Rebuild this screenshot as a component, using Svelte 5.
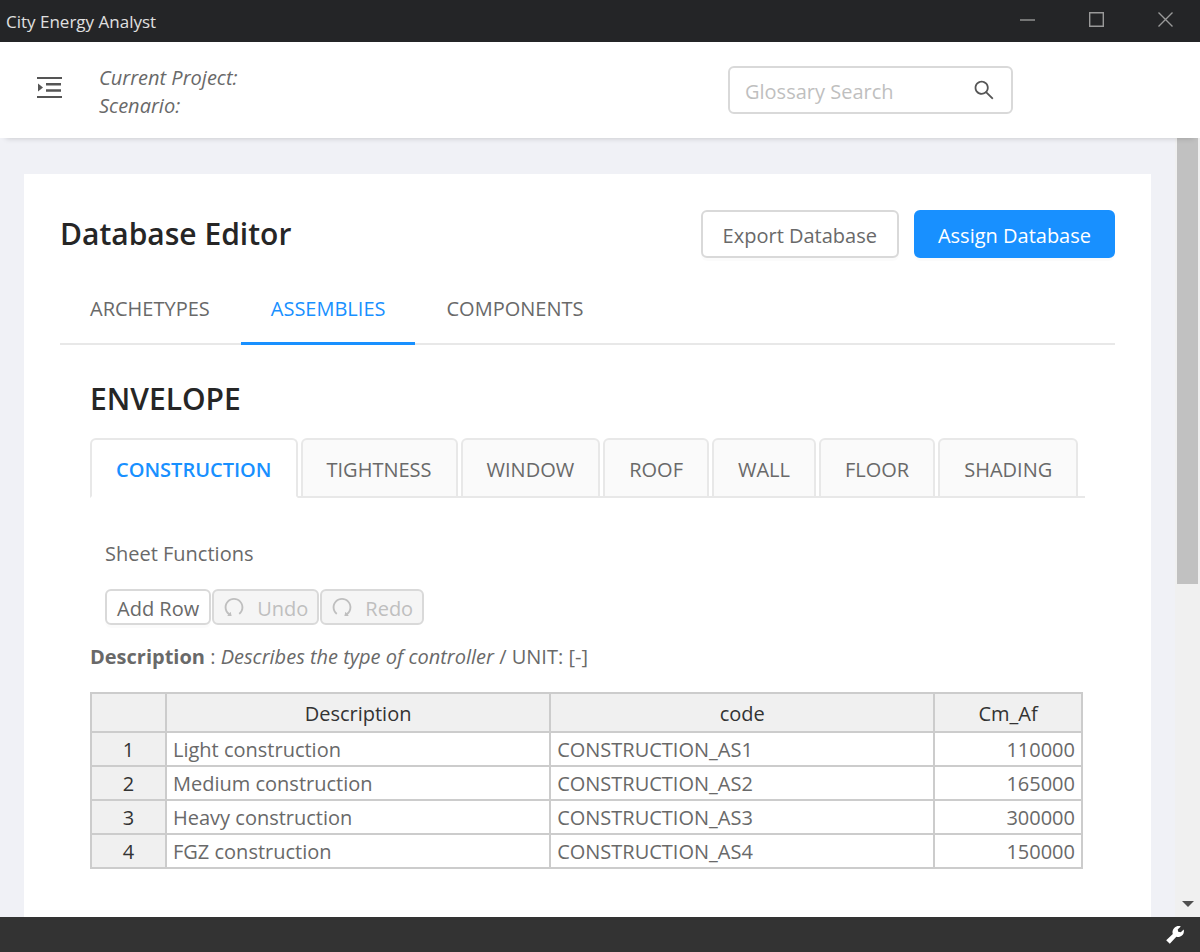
<script>
  const mainTabs = ['ARCHETYPES', 'ASSEMBLIES', 'COMPONENTS'];
  const sheets = ['CONSTRUCTION', 'TIGHTNESS', 'WINDOW', 'ROOF', 'WALL', 'FLOOR', 'SHADING'];
  const rows = [
    ['Light construction', 'CONSTRUCTION_AS1', 110000],
    ['Medium construction', 'CONSTRUCTION_AS2', 165000],
    ['Heavy construction', 'CONSTRUCTION_AS3', 300000],
    ['FGZ construction', 'CONSTRUCTION_AS4', 150000],
  ];
  let mainTab = $state('ASSEMBLIES');
  let sheet = $state('CONSTRUCTION');
</script>

{#snippet turnArrow()}
  <path d="M511.4 124C290.5 124.3 112 303 112 523.9c0 128 60.2 242 153.8 315.2l-37.5 48c-4.1 5.3-.3 13 6.3 12.9l167-.8c5.2 0 9-4.9 7.7-9.9L369.8 727a8 8 0 0 0-14.1-3L315 776.1c-10.2-8-20-16.7-29.3-26a318.64 318.64 0 0 1-68.6-101.7C200.4 609 192 567.1 192 523.9s8.4-85.1 25.1-124.5c16.1-38.1 39.2-72.3 68.6-101.7 29.4-29.4 63.6-52.5 101.7-68.6C426.9 212.4 468.8 204 512 204s85.1 8.4 124.5 25.1c38.1 16.1 72.3 39.2 101.7 68.6 29.4 29.4 52.5 63.6 68.6 101.7 16.7 39.4 25.1 81.3 25.1 124.5s-8.4 85.1-25.1 124.5a318.64 318.64 0 0 1-68.6 101.7c-7.5 7.5-15.3 14.5-23.4 21.2a7.93 7.93 0 0 0-1.2 11.1l39.4 50.5c2.8 3.5 7.9 4.1 11.4 1.3C854.5 760.8 912 649.1 912 523.9c0-221.1-179.4-400.2-400.6-399.9z" />
{/snippet}

<div class="app">
  <div class="titlebar">
    <span class="app-name">City Energy Analyst</span>
    <div class="window-controls">
      <button aria-label="Minimize">
        <svg width="16" height="16" viewBox="0 0 16 16"><path d="M0 8h15" /></svg>
      </button>
      <button aria-label="Maximize">
        <svg width="16" height="16" viewBox="0 0 16 16"><path d="M.7 .7h13.600v13.600H.7z" /></svg>
      </button>
      <button aria-label="Close">
        <svg width="16" height="16" viewBox="0 0 16 16"><path d="M.5 .5l14 14M14.500 .5L.5 14.500" /></svg>
      </button>
    </div>
  </div>

  <header>
    <button class="menu" aria-label="Open menu">
      <svg width="25" height="22" viewBox="0 0 25 22" fill="currentColor">
        <path d="M0 0h25v2H0zM9 6h15v2.500H9zM9 12.300h15v2.500H9zM0 19h25v2H0zM1 6.500v8l5-4z" />
      </svg>
    </button>
    <div class="project">
      <div>Current Project:</div>
      <div>Scenario:</div>
    </div>
    <div class="search">
      <input type="text" placeholder="Glossary Search" aria-label="Glossary Search" />
      <button aria-label="Search">
        <svg width="24" height="24" viewBox="0 0 1024 1024" fill="currentColor">
          <path d="M909.6 854.5L649.900 594.800C690.200 542.700 712 479 712 412c0-80.200-31.300-155.400-87.900-212.100-56.600-56.700-132-87.900-212.100-87.900s-155.500 31.300-212.100 87.900C143.200 256.500 112 331.800 112 412c0 80.100 31.300 155.500 87.900 212.100C256.500 680.800 331.800 712 412 712c67 0 130.600-21.800 182.700-62l259.700 259.600a8.200 8.200 0 0 0 11.600 0l43.600-43.500a8.200 8.200 0 0 0 0-11.600zM570.400 570.400C528 612.700 471.800 636 412 636s-116-23.300-158.400-65.600C211.300 528 188 471.800 188 412s23.300-116.100 65.600-158.400C296 211.300 352.200 188 412 188s116.100 23.200 158.400 65.600S636 352.200 636 412s-23.300 116.100-65.600 158.400z" />
        </svg>
      </button>
    </div>
  </header>

  <div class="body">
    <main>
      <section class="card">
        <div class="card-head">
          <h1>Database Editor</h1>
          <div class="actions">
            <button class="btn">Export Database</button>
            <button class="btn primary">Assign Database</button>
          </div>
        </div>

        <nav class="main-tabs">
          {#each mainTabs as name}
            <button class:active={mainTab === name} onclick={() => (mainTab = name)}>{name}</button>
          {/each}
        </nav>

        <div class="panel">
          <h2>ENVELOPE</h2>
          <div class="sheet-tabs">
            {#each sheets as name}
              <button class:active={sheet === name} onclick={() => (sheet = name)}>{name}</button>
            {/each}
          </div>

          <div class="functions">
            <div>Sheet Functions</div>
            <div class="tools">
              <button class="btn small">Add Row</button>
              <button class="btn small" disabled>
                <svg width="24" height="24" viewBox="0 0 1024 1024" fill="currentColor">{@render turnArrow()}</svg>
                Undo
              </button>
              <button class="btn small" disabled>
                <svg width="24" height="24" viewBox="0 0 1024 1024" fill="currentColor">
                  <g transform="matrix(-1 0 0 1 1024 0)">{@render turnArrow()}</g>
                </svg>
                Redo
              </button>
            </div>
          </div>

          <p class="info"><b>Description</b> : <i>Describes the type of controller</i> / UNIT: [-]</p>

          <table>
            <colgroup><col class="c-num" /><col class="c-desc" /><col class="c-code" /><col class="c-cm" /></colgroup>
            <thead>
              <tr><th aria-label="Row"></th><th>Description</th><th>code</th><th>Cm_Af</th></tr>
            </thead>
            <tbody>
              {#each rows as [description, code, cm], i}
                <tr><th>{i + 1}</th><td>{description}</td><td>{code}</td><td class="num">{cm}</td></tr>
              {/each}
            </tbody>
          </table>
        </div>
      </section>
    </main>
    <div class="scrollbar" aria-hidden="true">
      <div class="thumb"></div>
      <svg width="12" height="6" viewBox="0 0 12 6"><path d="M0 0h12L6 6z" fill="#505050" /></svg>
    </div>
  </div>

  <footer>
    <button aria-label="Settings">
      <svg width="18" height="18" viewBox="0 0 18 18" fill="#fff">
        <path d="M.2 14.200L6.800 7.900C6 5.600 6.800 3.200 8.500 1.700C10.100 .2 12.600-.3 14.800 .5L11.700 3.400L12.200 5.800L14.800 6.300L17.700 3.600C18.200 5.500 17.800 7.700 16.200 9.200C14.600 10.800 12.400 11.300 10.300 10.800L3.800 17.800Z" />
      </svg>
    </button>
  </footer>
</div>

<style>
  :global(body) {
    margin: 0;
  }
  .app {
    display: flex;
    flex-direction: column;
    height: 100vh;
    overflow: hidden;
    font-family: 'Open Sans', 'Noto Sans', sans-serif;
    font-size: 20px;
    line-height: 28px;
    color: #696969;
  }
  button,
  input {
    font: inherit;
    color: inherit;
    background: none;
    border: 0;
    padding: 0;
    margin: 0;
  }
  svg {
    display: block;
    flex: none;
  }
  .titlebar {
    flex: none;
    display: flex;
    justify-content: space-between;
    height: 42px;
    background: #242527;
    color: #e0e0e0;
    font-size: 17px;
  }
  .app-name {
    padding: 8px 6px;
  }
  .window-controls {
    display: flex;
  }
  .window-controls button {
    display: flex;
    justify-content: center;
    width: 69px;
    padding-top: 12px;
  }
  .window-controls path {
    fill: none;
    stroke: #999;
    stroke-width: 1.4;
  }
  header {
    flex: none;
    display: flex;
    align-items: center;
    height: 96px;
    padding: 0 187px 0 37px;
    box-sizing: border-box;
    background: #fff;
    position: relative;
    box-shadow: 0 6px 6px -6px rgba(0, 0, 0, 0.2);
  }
  .menu {
    padding-bottom: 4px;
    color: #555;
  }
  .project {
    flex: 1;
    padding: 3px 0 0 37px;
    font-style: italic;
  }
  .search {
    display: flex;
    align-items: center;
    width: 285px;
    height: 48px;
    box-sizing: border-box;
    padding: 0 15px;
    border: 2px solid #d9d9d9;
    border-radius: 6px;
  }
  .search button {
    color: #555;
  }
  .search input {
    flex: 1;
    min-width: 0;
    outline: 0;
    padding-top: 3px;
  }
  .search input::placeholder {
    color: #bfbfbf;
    opacity: 1;
  }
  .body {
    flex: 1;
    min-height: 0;
    display: flex;
    background: #f0f1f6;
  }
  main {
    flex: 1;
    min-width: 0;
    padding: 36px 24px 0;
    display: flex;
  }
  .card {
    flex: 1;
    min-width: 0;
    padding: 36px;
    background: #fff;
  }
  .card-head {
    display: flex;
    justify-content: space-between;
    align-items: center;
  }
  h1,
  h2 {
    margin: 0;
    font-size: 30px;
    line-height: 42px;
    font-weight: 600;
    color: #262626;
  }
  .actions {
    display: flex;
    gap: 15px;
  }
  .btn {
    display: flex;
    align-items: center;
    justify-content: center;
    height: 48px;
    padding: 3px 20px 0;
    box-sizing: border-box;
    border: 2px solid #d9d9d9;
    border-radius: 6px;
    background: #fff;
    box-shadow: 0 3px 0 rgba(0, 0, 0, 0.016);
  }
  .btn.primary {
    padding: 3px 22px 0;
    background: #1890ff;
    border-color: #1890ff;
    color: #fff;
  }
  .main-tabs {
    display: flex;
    gap: 1px;
    height: 87px;
    box-sizing: border-box;
    border-bottom: 2px solid #e8e8e8;
  }
  .main-tabs button {
    padding: 18px 30px 0;
    margin-bottom: -2px;
    border-bottom: 3px solid transparent;
  }
  .main-tabs .active {
    color: #1890ff;
    border-bottom-color: #1890ff;
  }
  .panel {
    padding: 33px 30px 0;
  }
  .sheet-tabs {
    display: flex;
    gap: 3px;
    height: 60px;
    margin-top: 18px;
    box-sizing: border-box;
    border-bottom: 2px solid #e8e8e8;
  }
  .sheet-tabs button {
    padding: 3px 24px 0;
    margin-bottom: -2px;
    border: 2px solid #e8e8e8;
    border-radius: 6px 6px 0 0;
    background: #fafafa;
  }
  .sheet-tabs .active {
    background: #fff;
    border-bottom-color: #fff;
    color: #1890ff;
    font-weight: 600;
  }
  .functions {
    padding: 42px 15px 0;
  }
  .tools {
    display: flex;
    gap: 1px;
    margin-top: 21px;
  }
  .btn.small {
    height: 36px;
    padding: 3px 10px 0;
    gap: 11px;
  }
  .btn.small svg {
    margin-top: -3px;
  }
  .btn.small:disabled {
    padding: 3px 9px 0 8px;
    background: #f5f5f5;
    color: #bfbfbf;
    box-shadow: none;
  }
  .info {
    margin: 18px 0 21px;
  }
  .info b {
    font-weight: 700;
  }
  table {
    width: calc(100% - 2px);
    table-layout: fixed;
    border-collapse: collapse;
  }
  .c-num {
    width: 75px;
  }
  .c-desc,
  .c-code {
    width: 39%;
  }
  .c-cm {
    width: 15%;
  }
  th,
  td {
    height: 30px;
    padding: 2px 6px 0;
    border: 2px solid #ccc;
    text-align: left;
  }
  th {
    background: #f0f0f0;
    color: #333;
    font-weight: 400;
    text-align: center;
  }
  thead th {
    height: 35px;
  }
  .num {
    text-align: right;
  }
  .scrollbar {
    flex: none;
    width: 25px;
    box-sizing: border-box;
    padding: 0 2px 10px;
    display: flex;
    flex-direction: column;
    align-items: center;
    justify-content: space-between;
    background: #f0f0f0;
  }
  .thumb {
    width: 21px;
    height: 58%;
    background: #c1c1c1;
  }
  footer {
    flex: none;
    display: flex;
    justify-content: flex-end;
    align-items: center;
    height: 35px;
    padding-right: 16px;
    background: #333;
  }
</style>
